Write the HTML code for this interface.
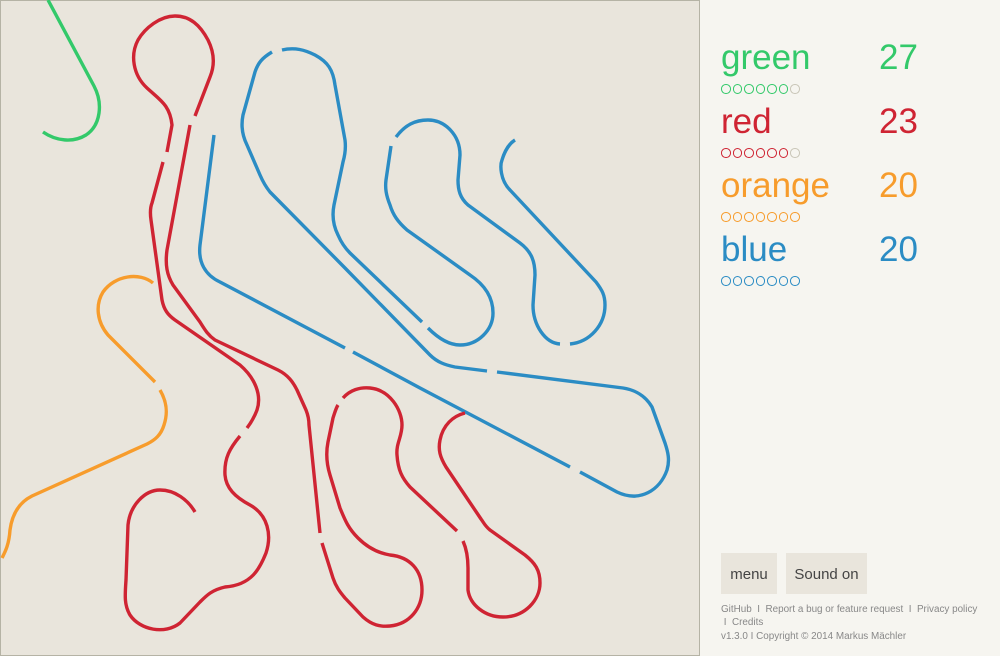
<!DOCTYPE html>
<html><head><meta charset="utf-8"><style>
*{margin:0;padding:0;box-sizing:border-box}
body{width:1000px;height:656px;background:#f6f5f0;font-family:"Liberation Sans","DejaVu Sans",sans-serif;position:relative;overflow:hidden}
#cv{position:absolute;left:0;top:0;width:700px;height:656px;background:#e9e5dc;border:1px solid #b5b3a5}
svg{position:absolute;left:0;top:0}
.p{position:absolute;left:721px;font-size:35px;line-height:40px}
.s{position:absolute;left:879px;font-size:35px;line-height:40px}
.dots{position:absolute;left:721px;height:10px;line-height:0}
.dots i{display:inline-block;width:9.5px;height:9.5px;border:1.6px solid;border-radius:50%;margin-right:2px}
.btn{position:absolute;top:553px;height:41px;background:#e9e5dc;color:#444;font-size:15px;line-height:43px;text-align:center}
.f{position:absolute;left:721px;font-size:9.9px;color:#888;line-height:13px;white-space:nowrap}
</style></head><body>
<div id="cv"></div>
<svg width="700" height="656" viewBox="0 0 700 656" fill="none" stroke-width="3.4" stroke-linecap="butt" stroke-linejoin="round">
<g stroke="#33c96a"><path d="M48,0 L94,86 C103,103 101,125 86,135 C73,143 56,141 43,132"/></g>
<g stroke="#f79c2c">
<path d="M153,283 C140,272 115,275 103,292 C95,305 97,322 108,335 L155,382"/>
<path d="M160,390 C167,402 168,413 164,425 C161,435 155,440 147,444 L32,496 C18,503 12,515 10,530 C9,545 5,552 2,558"/>
</g>
<g stroke="#2b8cc4">
<path d="M214,135 L200,245 C198,262 205,275 220,282 L345,348"/>
<path d="M353,352 L420,388 L570,467"/>
<path d="M580,472 L617,492 C640,503 660,490 667,470 C670,460 668,452 665,443 L652,407 C645,395 635,390 623,388 L497,372"/>
<path d="M487,371 L455,367 C445,365 437,362 430,355 L345,268 L270,192 C266,187 263,182 260,175 L247,145 C242,135 241,125 243,115 L255,72 C258,63 262,58 272,52"/>
<path d="M282,50 C295,47 305,50 315,55 C328,62 333,70 335,85 L345,140 C346,148 345,155 343,162 L334,205 C332,215 333,225 338,235 C341,242 344,247 350,253 L422,322"/>
<path d="M428,328 C440,340 450,345 460,345 C478,345 493,330 493,313 C493,298 485,285 470,275 L407,230 C398,222 393,215 390,205 C386,195 385,188 386,180 L391,146"/>
<path d="M396,137 C405,125 415,120 428,120 C445,120 460,135 460,155 L458,180 C458,190 460,198 468,205 L520,243 C532,252 535,262 535,275 L533,305 C533,325 545,343 560,344"/>
<path d="M570,344 C590,342 605,325 605,305 C605,295 602,290 596,282 L510,190 C500,180 500,165 502,160 C505,150 510,143 515,140"/>
</g>
<g stroke="#cf2433">
<path d="M195,116 L210,77 C215,65 214,52 208,40 C200,25 190,16 175,16 C160,16 145,28 138,40 C130,55 133,75 147,88 C160,100 170,105 172,125 L167,152"/>
<path d="M163,162 L152,203 C150,208 150,213 151,220 L162,300 C164,310 168,315 175,320 L240,365 C255,378 262,395 257,410 C254,418 250,424 247,428"/>
<path d="M240,436 C230,448 224,458 225,475 C226,488 235,497 250,505 C268,515 272,535 266,553 C260,568 252,585 225,587 C212,590 207,595 200,602 L180,623 C165,635 140,630 130,615 C124,605 125,595 126,580 L128,525 C130,505 145,490 160,490 C175,490 188,500 195,512"/>
<path d="M190,125 L167,250 C165,265 167,275 173,285 L200,322 C205,330 208,335 215,340 L278,370 C288,375 293,382 297,390 L306,410 C308,415 309,420 309,425 L320,533"/>
<path d="M322,543 L333,578 C336,587 340,592 345,598 L363,617 C372,625 380,627 390,626 C410,624 422,608 422,590 C422,570 410,557 390,555 C378,553 368,548 358,538 C348,528 345,520 340,508 L330,475 C326,462 326,452 328,442 L333,418 C335,412 336,408 338,405"/>
<path d="M343,398 C350,390 360,387 370,388 C390,390 402,410 402,425 C402,437 396,443 397,455 C398,470 402,478 410,487 L457,531"/>
<path d="M463,541 C467,550 468,558 468,568 L468,590 C470,605 485,617 503,617 C525,617 540,600 540,583 C540,570 535,563 525,555 L490,530 C485,526 484,523 481,519 L446,467 C440,457 438,450 440,440 C443,425 453,416 465,413"/>
</g>
</svg>

<div class="p" style="top:38px;color:#33c96a">green</div><div class="s" style="top:38px;color:#33c96a">27</div>
<div class="dots" style="top:84px;color:#33c96a"><i></i><i></i><i></i><i></i><i></i><i></i><i style="color:#c9c6b8"></i></div>
<div class="p" style="top:102px;color:#cf2433">red</div><div class="s" style="top:102px;color:#cf2433">23</div>
<div class="dots" style="top:148px;color:#cf2433"><i></i><i></i><i></i><i></i><i></i><i></i><i style="color:#c9c6b8"></i></div>
<div class="p" style="top:166px;color:#f79c2c">orange</div><div class="s" style="top:166px;color:#f79c2c">20</div>
<div class="dots" style="top:212px;color:#f79c2c"><i></i><i></i><i></i><i></i><i></i><i></i><i></i></div>
<div class="p" style="top:230px;color:#2b8cc4">blue</div><div class="s" style="top:230px;color:#2b8cc4">20</div>
<div class="dots" style="top:276px;color:#2b8cc4"><i></i><i></i><i></i><i></i><i></i><i></i><i></i></div>

<div class="btn" style="left:721px;width:56px">menu</div>
<div class="btn" style="left:786px;width:81px">Sound on</div>
<div class="f" style="top:603px">GitHub &nbsp;I&nbsp; Report a bug or feature request &nbsp;I&nbsp; Privacy policy</div>
<div class="f" style="top:616px">&nbsp;I&nbsp; Credits</div>
<div class="f" style="top:630px">v1.3.0 I Copyright © 2014 Markus Mächler</div>
</body></html>
